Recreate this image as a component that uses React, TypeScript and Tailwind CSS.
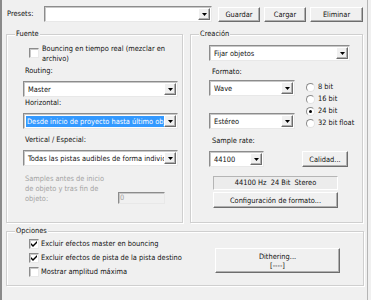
import React from "react";

const raised =
  "border border-t-white border-l-white border-r-[#6d6d6d] border-b-[#6d6d6d] shadow-[inset_-1px_-1px_#b0b0b0]";
const sunken =
  "border border-t-[#8c8c8c] border-l-[#8c8c8c] border-r-[#e8e8e8] border-b-[#e8e8e8] shadow-[inset_1px_1px_#c8c8c8]";

const Arrow = () => (
  <div className={`w-[12px] h-full flex items-center justify-center bg-[#f0f0f0] ${raised}`}>
    <svg width="5" height="3" viewBox="0 0 5 3">
      <path d="M0 0h5L2.5 3z" fill="#000" />
    </svg>
  </div>
);

const Combo = ({ text, w, hl }: { text: string; w: string; hl?: boolean }) => (
  <div className={`${w} h-[16px] shrink-0 bg-white flex ${sunken} p-[1px]`}>
    <div className="flex-1 min-w-0 overflow-hidden whitespace-nowrap flex items-center pl-[1px]">
      <span className={hl ? "bg-[#3399ff] text-white pl-[1px] w-full leading-[11px]" : "pl-[2px] leading-[11px]"}>{text}</span>
    </div>
    <Arrow />
  </div>
);

const Btn = ({ children, cls }: { children: React.ReactNode; cls: string }) => (
  <div className={`${cls} shrink-0 bg-[#f0f0f0] ${raised} flex flex-col items-center justify-center leading-[9px] whitespace-nowrap`}>
    {children}
  </div>
);

const Check = ({ on }: { on?: boolean }) => (
  <div className={`w-[10px] h-[10px] bg-white shrink-0 ${sunken} flex items-center justify-center`}>
    {on && (
      <svg width="6" height="6" viewBox="0 0 6 6">
        <path d="M0 2l2 2 4-4v2L2 6 0 4z" fill="#000" />
      </svg>
    )}
  </div>
);

const Radio = ({ on, label }: { on?: boolean; label: string }) => (
  <div className="flex items-center h-[12px] gap-[3px] leading-[12px] whitespace-nowrap">
    <div className="w-[9px] h-[9px] shrink-0 rounded-full bg-white border border-t-[#8c8c8c] border-l-[#8c8c8c] border-r-[#e3e3e3] border-b-[#e3e3e3] flex items-center justify-center">
      {on && <div className="w-[3px] h-[3px] rounded-full bg-black" />}
    </div>
    <span>{label}</span>
  </div>
);

const Group = ({ label, cls, children }: { label: string; cls: string; children: React.ReactNode }) => (
  <div className={`relative border border-[#cfcfcf] shadow-[inset_1px_1px_white,1px_1px_white] ${cls}`}>
    <span className="absolute -top-[6px] left-[8px] px-[1px] bg-[#f0f0f0] leading-[10px]">{label}</span>
    {children}
  </div>
);

export default function App() {
  return (
    <div className="w-[371px] h-[300px] bg-[#f0f0f0] overflow-hidden font-['DejaVu_Sans_Condensed','Liberation_Sans',sans-serif] text-[7.4px] text-[#111]">
      <div className="w-[368px] h-full border-l-2 border-r border-l-[#8a8a8a] border-r-[#b5b5b5] pt-[6px]">
        <div className="flex items-center ml-[5px]">
          <span className="w-[37px]">Presets:</span>
          <Combo text="" w="w-[168px]" />
          <Btn cls="w-[42px] h-[15px] ml-[6px]">Guardar</Btn>
          <Btn cls="w-[42px] h-[15px] ml-[4px]">Cargar</Btn>
          <Btn cls="w-[53px] h-[15px] ml-[4px]">Eliminar</Btn>
        </div>

        <div className="flex mt-[12px] ml-[4px] gap-[7px]">
          <Group label="Fuente" cls="w-[177px] h-[189px] pl-[16px]">
            <div className="flex gap-[3px] pl-[6px] mt-[9px]">
              <div className="pt-[4px]"><Check /></div>
              <span className="leading-[10px] w-[132px]">Bouncing en tiempo real (mezclar en archivo)</span>
            </div>
            <div className="mt-[2px] leading-[10px] pl-[2px]">Routing:</div>
            <div className="mt-[5px]"><Combo text="Master" w="w-[155px]" /></div>
            <div className="mt-[1px] leading-[10px] pl-[2px]">Horizontal:</div>
            <div className="mt-[5px]"><Combo text="Desde inicio de proyecto hasta último objeto" w="w-[155px]" hl /></div>
            <div className="mt-[6px] leading-[10px] pl-[2px]">Vertical / Especial:</div>
            <div className="mt-[5px]"><Combo text="Todas las pistas audibles de forma individual" w="w-[155px]" /></div>
            <div className="flex items-end mt-[8px] pl-[2px]">
              <span className="w-[86px] leading-[10px] text-[#a3a3a3]">Samples antes de inicio de objeto y tras fin de objeto:</span>
              <div className={`ml-[7px] w-[47px] h-[12px] ${sunken} text-[#a3a3a3] leading-[10px] pl-[1px]`}>0</div>
            </div>
          </Group>

          <Group label="Creación" cls="w-[173px] h-[189px] pl-[18px]">
            <div className="mt-[10px]"><Combo text="Fijar objetos" w="w-[141px]" /></div>
            <div className="mt-[6px] leading-[10px] pl-[3px]">Formato:</div>
            <div className="flex">
              <div className="flex flex-col pt-[3px]">
                <Combo text="Wave" w="w-[86px]" />
                <div className="mt-[17px]"><Combo text="Estéreo" w="w-[86px]" /></div>
              </div>
              <div className="flex flex-col ml-[11px] pt-[4px]">
                <Radio label="8 bit" />
                <Radio label="16 bit" />
                <Radio on label="24 bit" />
                <Radio label="32 bit float" />
              </div>
            </div>
            <div className="mt-[7px] leading-[10px] pl-[3px]">Sample rate:</div>
            <div className="flex items-center mt-[5px]">
              <Combo text="44100" w="w-[55px]" />
              <Btn cls="w-[46px] h-[16px] ml-[38px]">Calidad...</Btn>
            </div>
            <div className="ml-[4px] mt-[9px] w-[125px] h-[14px] border border-t-[#b5b5b5] border-l-[#b5b5b5] border-r-white border-b-white bg-[#ececec] flex items-center justify-center leading-[10px] whitespace-pre">
              {"44100 Hz  24 Bit  Stereo"}
            </div>
            <Btn cls="ml-[4px] mt-[2px] w-[125px] h-[16px]">Configuración de formato...</Btn>
          </Group>
        </div>

        <Group label="Opciones" cls="ml-[4px] mt-[8px] w-[358px] h-[55px] flex items-start pl-[22px]">
          <div className="flex flex-col w-[164px] pt-[5px]">
            <div className="flex items-center gap-[2px] h-[14px] whitespace-nowrap"><Check on /><span>Excluir efectos master en bouncing</span></div>
            <div className="flex items-center gap-[2px] h-[14px] whitespace-nowrap"><Check on /><span>Excluir efectos de pista de la pista destino</span></div>
            <div className="flex items-center gap-[2px] h-[14px] whitespace-nowrap"><Check /><span>Mostrar amplitud máxima</span></div>
          </div>
          <Btn cls="ml-[22px] mt-[16px] w-[125px] h-[25px]">
            <span>Dithering...</span>
            <span>[----]</span>
          </Btn>
        </Group>
      </div>
    </div>
  );
}
